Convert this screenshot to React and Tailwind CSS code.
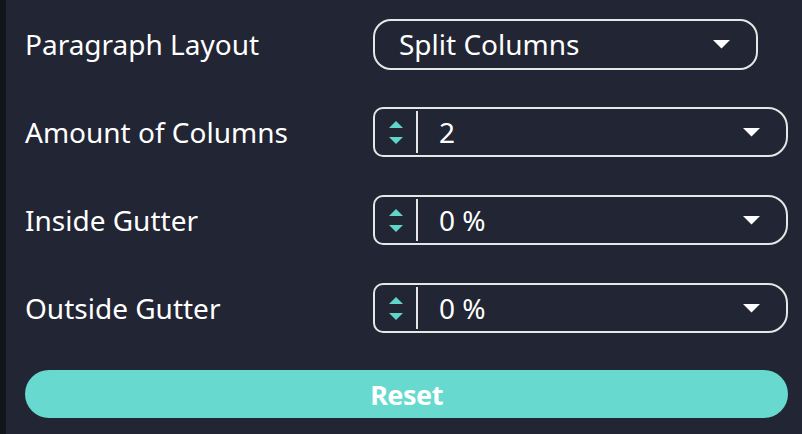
import React from "react";

const Caret = () => (
    <svg width="19" height="10" viewBox="0 0 19 10" className="shrink-0">
        <path d="M1 1 L18 1 L9.5 9.5 Z" fill="#ffffff" />
    </svg>
);

const Spinner = () => (
    <div className="flex h-full w-[43px] shrink-0 flex-col items-center justify-center gap-[9px] border-r-2 border-[#e6e6e6]">
        <svg width="14" height="7" viewBox="0 0 14 7">
            <path d="M0 7 L7 0 L14 7 Z" fill="#5fd6c9" />
        </svg>
        <svg width="14" height="7" viewBox="0 0 14 7">
            <path d="M0 0 L14 0 L7 7 Z" fill="#5fd6c9" />
        </svg>
    </div>
);

const Row = ({ label, children }) => (
    <div className="flex h-[50px] items-center">
        <div className="w-[348px] shrink-0 text-[28px] leading-none text-white">{label}</div>
        {children}
    </div>
);

const NumberField = ({ value }) => (
    <div className="flex h-[50px] w-[415px] items-center rounded-l-[10px] rounded-r-[20px] border-2 border-[#e6e6e6] py-[2px]">
        <Spinner />
        <span className="ml-[21px] flex-1 text-[28px] leading-none text-white">{value}</span>
        <span className="mr-[25px]">
            <Caret />
        </span>
    </div>
);

export default function App() {
    return (
        <div
            className="flex h-[434px] w-[802px] bg-[#222533]"
            style={{ fontFamily: '"Noto Sans", "Open Sans", sans-serif' }}
        >
            <div className="w-[6px] shrink-0 bg-[#12141b]" />
            <div className="flex flex-1 flex-col gap-[38px] pl-[19px] pr-[15px] pt-[19px]">
                <Row label="Paragraph Layout">
                    <div className="flex h-[51px] w-[385px] items-center rounded-[18px] border-2 border-[#e6e6e6] pl-[24px] pr-[25px]">
                        <span className="flex-1 text-[28px] leading-none text-white">Split Columns</span>
                        <Caret />
                    </div>
                </Row>
                <Row label="Amount of Columns">
                    <NumberField value="2" />
                </Row>
                <Row label="Inside Gutter">
                    <NumberField value="0 %" />
                </Row>
                <Row label="Outside Gutter">
                    <NumberField value="0 %" />
                </Row>
                <button className="-mt-[1px] h-[48px] w-full rounded-full bg-[#67d9ce] text-[27px] font-bold leading-none tracking-[-0.5px] text-white">
                    Reset
                </button>
            </div>
        </div>
    );
}
